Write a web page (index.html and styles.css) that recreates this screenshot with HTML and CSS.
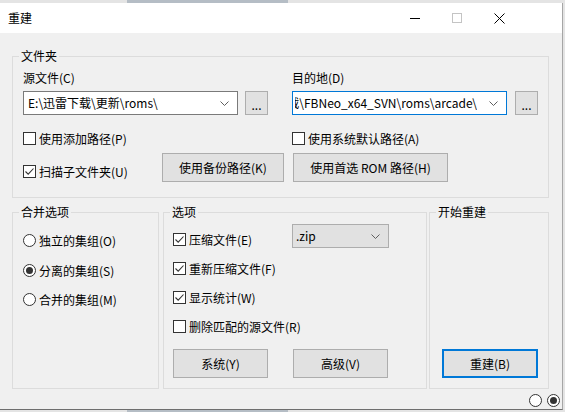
FILE: index.html
```html
<!DOCTYPE html>
<html lang="zh-CN">
<head>
  <meta charset="UTF-8" />
  <title>重建</title>
  <link rel="stylesheet" href="styles.css">
</head>
<body>
  <div class="window">
    <div class="titlebar">
      <span class="title">重建</span>
      <div class="caption-btns">
        <span class="cap-btn">
          <svg width="10" height="10" viewBox="0 0 10 10"><path d="M0 5.5H10" stroke="#000" stroke-width="1"/></svg>
        </span>
        <span class="cap-btn">
          <svg width="10" height="10" viewBox="0 0 10 10"><rect x="0.5" y="0.5" width="9" height="9" fill="none" stroke="#c4c4c4"/></svg>
        </span>
        <span class="cap-btn">
          <svg width="11" height="11" viewBox="0 0 11 11"><path d="M0.5 0.5L10.5 10.5M10.5 0.5L0.5 10.5" stroke="#000" stroke-width="1"/></svg>
        </span>
      </div>
    </div>

    <div class="dialog">
      <!-- Folders -->
      <fieldset class="group group-folders">
        <legend>文件夹</legend>
        <div class="folder-grid">
          <div class="folder-col">
            <div class="field-label">源文件(C)</div>
            <div class="path-row">
              <div class="combo">
                <span class="combo-text">E:\迅雷下载\更新\roms\</span>
                <svg class="chevron" width="9" height="5" viewBox="0 0 9 5"><path d="M0.5 0.5L4.5 4.5L8.5 0.5" fill="none" stroke="#5f5f5f"/></svg>
              </div>
              <button class="btn btn-dots">...</button>
            </div>
            <div class="folder-bottom">
              <div class="checks">
                <label class="check"><span class="box"></span>使用添加路径(P)</label>
                <label class="check"><span class="box"><svg width="11" height="11" viewBox="0 0 11 11"><path d="M1.5 5.5L4.2 8.2L9.5 2.5" fill="none" stroke="#333" stroke-width="1.1"/></svg></span>扫描子文件夹(U)</label>
              </div>
              <button class="btn btn-backup">使用备份路径(K)</button>
            </div>
          </div>

          <div class="folder-col">
            <div class="field-label">目的地(D)</div>
            <div class="path-row path-row-dest">
              <div class="combo combo-focus">
                <span class="combo-text combo-text-end"><span>E:\迅雷下载\FBNeo_x64_SVN\roms\arcade\</span></span>
                <svg class="chevron" width="9" height="5" viewBox="0 0 9 5"><path d="M0.5 0.5L4.5 4.5L8.5 0.5" fill="none" stroke="#5f5f5f"/></svg>
              </div>
              <button class="btn btn-dots">...</button>
            </div>
            <div class="checks">
              <label class="check"><span class="box"></span>使用系统默认路径(A)</label>
            </div>
            <button class="btn btn-preferred">使用首选 ROM 路径(H)</button>
          </div>
        </div>
      </fieldset>

      <div class="bottom-groups">
        <!-- Merge options -->
        <fieldset class="group group-merge">
          <legend>合并选项</legend>
          <div class="radio-list">
            <label class="radio"><span class="circle"></span>独立的集组(O)</label>
            <label class="radio"><span class="circle on"></span>分离的集组(S)</label>
            <label class="radio"><span class="circle"></span>合并的集组(M)</label>
          </div>
        </fieldset>

        <!-- Options -->
        <fieldset class="group group-options">
          <legend>选项</legend>
          <div class="options-list">
            <div class="options-first">
              <label class="check"><span class="box"><svg width="11" height="11" viewBox="0 0 11 11"><path d="M1.5 5.5L4.2 8.2L9.5 2.5" fill="none" stroke="#333" stroke-width="1.1"/></svg></span>压缩文件(E)</label>
              <div class="combo combo-list">
                <span class="combo-text">.zip</span>
                <svg class="chevron" width="9" height="5" viewBox="0 0 9 5"><path d="M0.5 0.5L4.5 4.5L8.5 0.5" fill="none" stroke="#5f5f5f"/></svg>
              </div>
            </div>
            <label class="check"><span class="box"><svg width="11" height="11" viewBox="0 0 11 11"><path d="M1.5 5.5L4.2 8.2L9.5 2.5" fill="none" stroke="#333" stroke-width="1.1"/></svg></span>重新压缩文件(F)</label>
            <label class="check"><span class="box"><svg width="11" height="11" viewBox="0 0 11 11"><path d="M1.5 5.5L4.2 8.2L9.5 2.5" fill="none" stroke="#333" stroke-width="1.1"/></svg></span>显示统计(W)</label>
            <label class="check"><span class="box"></span>删除匹配的源文件(R)</label>
            <div class="options-buttons">
              <button class="btn btn-option">系统(Y)</button>
              <button class="btn btn-option">高级(V)</button>
            </div>
          </div>
        </fieldset>

        <!-- Start -->
        <fieldset class="group group-start">
          <legend>开始重建</legend>
          <div class="start-body">
            <button class="btn btn-rebuild">重建(B)</button>
          </div>
        </fieldset>
      </div>

      <div class="status-radios">
        <span class="circle"></span>
        <span class="circle on"></span>
      </div>
    </div>
  </div>
</body>
</html>
```

FILE: styles.css
```css
/* Basic reset */
* {
  box-sizing: border-box;
}

body {
  margin: 0;
  height: 412px;
  overflow: hidden;
  font-family: "Noto Sans CJK SC", "Microsoft YaHei", sans-serif;
  font-size: 12px;
  color: #000000;
  /* desktop / taskbar behind the dialog */
  background: linear-gradient(to right, #e4e4e4 127px, #b5bdc5 127px, #b5bdc5 288px, #e4e4e4 288px);
}

/* Window frame */
.window {
  width: 563px;
  height: 407px;
  margin-top: 3px;
  background-color: #f0f0f0;
  border-right: 1px solid #a6a6a6;
  border-bottom: 1px solid #6e6e6e;
}

.titlebar {
  height: 30px;
  background-color: #ffffff;
  display: flex;
  align-items: center;
}

.title {
  padding-left: 8px;
  line-height: 16px;
}

.caption-btns {
  margin-left: auto;
  padding-right: 42px;
  display: flex;
}

.cap-btn {
  width: 42px;
  height: 30px;
  display: flex;
  align-items: center;
  justify-content: center;
}

.cap-btn svg {
  display: block;
}

/* Group boxes */
.group {
  margin: 0;
  padding: 0;
  min-width: 0;
  border: 1px solid #dcdcdc;
}

.group legend {
  margin-left: 6px;
  padding: 0 2px;
  line-height: 16px;
}

.group-folders {
  width: 537px;
  margin: 15px 0 0 12px;
}

.folder-grid {
  display: grid;
  grid-template-columns: 261px 246px;
  column-gap: 8px;
  padding: 6px 10px 15px 10px;
}

.field-label {
  line-height: 16px;
}

.path-row {
  display: flex;
  gap: 7px;
  margin-top: 5px;
}

.path-row-dest {
  gap: 8px;
}

/* Combo boxes */
.combo {
  width: 215px;
  height: 24px;
  display: flex;
  align-items: center;
  background-color: #ffffff;
  border: 1px solid #7a7a7a;
  padding: 0 8px 0 4px;
}

.combo-focus {
  border-color: #0078d7;
}

.combo-text {
  flex: 1;
  min-width: 0;
  white-space: nowrap;
  overflow: hidden;
  line-height: 16px;
}

.combo-text-end {
  display: flex;
  justify-content: flex-end;
  margin-left: -2px;
  margin-right: 12px;
}

.chevron {
  flex: none;
  display: block;
}

.combo-list {
  width: 97px;
  background-color: #e1e1e1;
  border-color: #adadad;
  padding-left: 3px;
}

/* Buttons */
.btn {
  font-family: inherit;
  font-size: 12px;
  color: #000000;
  background-color: #e1e1e1;
  border: 1px solid #adadad;
  padding: 0;
  margin: 0;
  height: 29px;
  line-height: 16px;
}

.btn-dots {
  width: 23px;
  height: 24px;
  padding-top: 3px;
}

.btn-backup {
  width: 122px;
  margin-top: 38px;
}

.btn-preferred {
  width: 155px;
  margin: 6px 0 0 1px;
}

.btn-option {
  width: 95px;
}

.btn-rebuild {
  width: 96px;
  border: 2px solid #0078d7;
}

/* Check boxes */
.folder-bottom {
  display: flex;
  justify-content: space-between;
  align-items: flex-start;
}

.checks {
  display: flex;
  flex-direction: column;
  gap: 16px;
  padding-top: 15px;
}

.check,
.radio {
  display: flex;
  align-items: center;
  line-height: 17px;
  height: 17px;
  white-space: nowrap;
}

.box {
  width: 13px;
  height: 13px;
  margin-right: 3px;
  background-color: #ffffff;
  border: 1px solid #333333;
  display: flex;
  align-items: center;
  justify-content: center;
}

.box svg {
  display: block;
}

/* Radio buttons */
.circle {
  width: 13px;
  height: 13px;
  border-radius: 50%;
  background-color: #ffffff;
  border: 1px solid #333333;
  margin-right: 3px;
  display: flex;
  align-items: center;
  justify-content: center;
}

.circle.on::after {
  content: "";
  width: 7px;
  height: 7px;
  border-radius: 50%;
  background-color: #333333;
}

/* Lower row of groups */
.bottom-groups {
  display: flex;
  margin: 6px 0 0 12px;
}

.group-merge {
  width: 147px;
  margin-right: 4px;
}

.group-options {
  width: 264px;
  margin-right: 2px;
}

.group-start {
  width: 120px;
}

.radio-list {
  display: flex;
  flex-direction: column;
  gap: 12.5px;
  padding: 12px 0 0 10px;
}

.options-list {
  display: flex;
  flex-direction: column;
  gap: 12px;
  padding: 4px 0 10px 9px;
}

.options-first {
  display: grid;
  grid-template-columns: 119px 97px;
}

.options-first .check {
  align-self: end;
  margin-bottom: 0;
}

.options-buttons {
  display: flex;
  gap: 25px;
  margin-top: 2px;
}

.start-body {
  height: 100%;
  display: flex;
  flex-direction: column;
  justify-content: flex-end;
  padding: 0 0 10px 12px;
}

/* Bottom right state radios */
.status-radios {
  display: flex;
  justify-content: flex-end;
  gap: 5px;
  margin-top: 5px;
  padding-right: 2px;
}

.status-radios .circle {
  margin-right: 0;
}
```
